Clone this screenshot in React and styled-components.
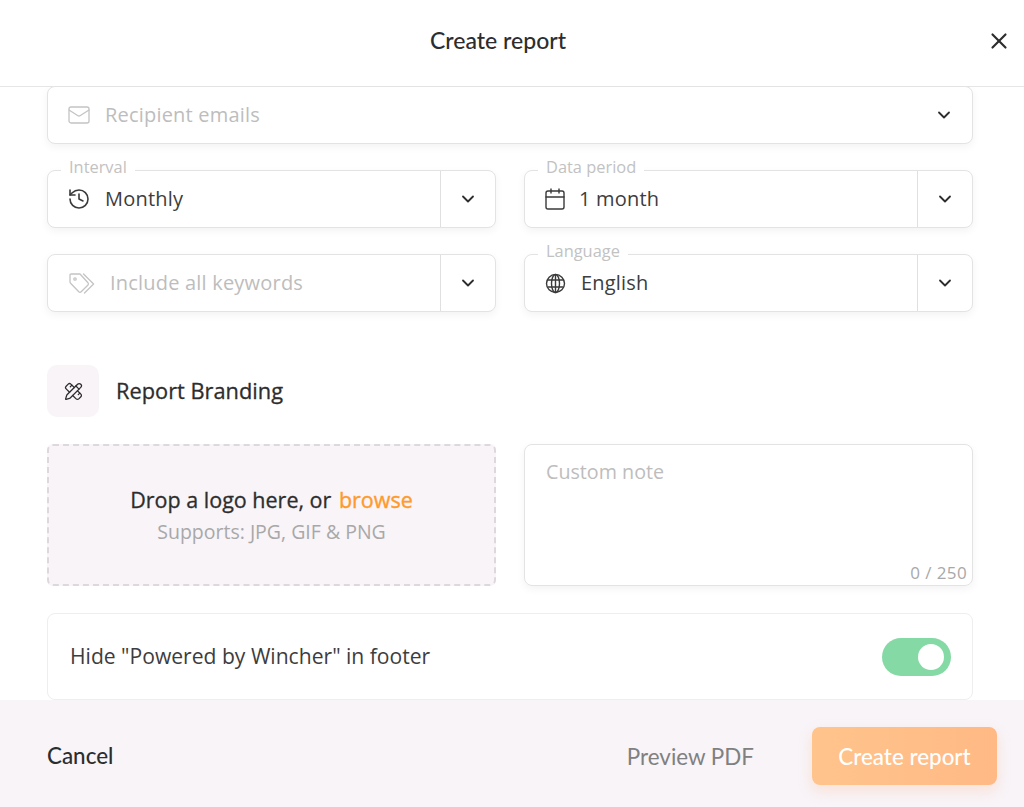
import React from "react";
import styled, { createGlobalStyle } from "styled-components";
import { Calendar, ChevronDown, History, Mail, PencilRuler, X } from "lucide-react";

const GlobalStyle = createGlobalStyle`
    html, body {
        margin: 0;
        padding: 0;
        background: #fff;
    }
    * {
        box-sizing: border-box;
    }
`;

const Page = styled.div`
    width: 1024px;
    height: 807px;
    display: flex;
    flex-direction: column;
    overflow: hidden;
    background: #fff;
    font-family: "Open Sans", sans-serif;
    color: #2d2d2d;
`;
const Header = styled.header`
    height: 87px;
    flex: none;
    display: flex;
    align-items: center;
    justify-content: center;
    position: relative;
    border-bottom: 1px solid #e6e6e6;
    padding: 0 28px 6px 0;
    font-family: Lato, sans-serif;
    font-size: 23px;
    font-weight: 500;
`;
const Close = styled.button`
    position: absolute;
    top: 28px;
    right: 12px;
    display: flex;
    padding: 0;
    border: none;
    background: none;
    color: #2d2d2d;
`;
const Body = styled.main`
    flex: 1;
    padding: 0 51px 0 47px;
    display: flex;
    flex-direction: column;
    margin-top: -1px;
    overflow: hidden;
`;
const FieldGrid = styled.div`
    display: grid;
    grid-template-columns: 449px 449px;
    gap: 26px 28px;
`;
const Field = styled.div`
    grid-column: ${({ wide }) => (wide ? "1 / -1" : "auto")};
    position: relative;
    height: 58px;
    display: flex;
    align-items: center;
    background: #fff;
    border: 1px solid #e3e3e3;
    border-radius: 8px;
    box-shadow: 0 3px 8px rgba(0, 0, 0, 0.05);
`;
const FloatLabel = styled.span`
    position: absolute;
    top: -14px;
    left: 13px;
    padding: 0 8px;
    background: #fff;
    font-size: 16.4px;
    line-height: 20px;
    color: #c2c2c2;
`;
const FieldIcon = styled.span`
    display: flex;
    margin-left: ${({ inset }) => inset}px;
    color: ${({ muted }) => (muted ? "#c4c4c4" : "#3a3a3a")};
`;
const FieldText = styled.span`
    flex: 1;
    margin-left: ${({ gap }) => gap}px;
    padding-bottom: 2px;
    font-size: 20px;
    letter-spacing: 0.2px;
    color: ${({ muted }) => (muted ? "#bdbdbd" : "#3d3d3d")};
`;
const Caret = styled.span`
    width: ${({ bare }) => (bare ? "57px" : "55px")};
    align-self: stretch;
    display: flex;
    align-items: center;
    justify-content: center;
    border-left: ${({ bare }) => (bare ? "none" : "1px solid #e0e0e0")};
    color: #2d2d2d;
`;
const SectionTitle = styled.div`
    display: flex;
    align-items: center;
    gap: 17px;
    margin-top: 53px;
    font-size: 21.8px;
    color: #2d2d2d;
    -webkit-text-stroke: 0.3px #2d2d2d;
`;
const SectionName = styled.span`
    padding-bottom: 2px;
`;
const IconTile = styled.span`
    width: 52px;
    height: 52px;
    display: flex;
    align-items: center;
    justify-content: center;
    border-radius: 10px;
    background: #f8f4f8;
    -webkit-text-stroke: 0;
`;
const BrandGrid = styled.div`
    display: grid;
    grid-template-columns: 449px 449px;
    gap: 28px;
    margin-top: 27px;
`;
const DropZone = styled.div`
    height: 142px;
    display: flex;
    flex-direction: column;
    align-items: center;
    justify-content: center;
    background: #f8f4f8;
    border: 2px dashed #dcd8dc;
    border-radius: 6px;
`;
const DropTitle = styled.div`
    font-size: 21.5px;
    line-height: 30px;
    -webkit-text-stroke: 0.3px #2d2d2d;
`;
const Browse = styled.span`
    color: #ff9a2e;
    margin-left: 2px;
    -webkit-text-stroke: 0.4px #ff9a2e;
`;
const DropHint = styled.div`
    font-size: 19.5px;
    line-height: 28px;
    margin-top: 3px;
    color: #a8a8a8;
`;
const Note = styled.div`
    position: relative;
    height: 142px;
    padding: 13px 21px;
    border: 1px solid #e3e3e3;
    border-radius: 8px;
    box-shadow: 0 3px 8px rgba(0, 0, 0, 0.05);
    font-size: 19.7px;
    color: #bdbdbd;
`;
const Counter = styled.span`
    position: absolute;
    right: 5px;
    bottom: 1px;
    font-size: 17px;
    letter-spacing: 0.4px;
    color: #a8a8a8;
`;
const ToggleRow = styled.div`
    height: 87px;
    flex: none;
    margin-top: 27px;
    padding: 0 21px 0 22px;
    display: flex;
    align-items: center;
    justify-content: space-between;
    border: 1px solid #eeeeee;
    border-radius: 8px;
    font-size: 21.1px;
    color: #3d3d3d;
`;
const ToggleText = styled.span`
    padding-bottom: 2px;
`;
const Toggle = styled.span`
    width: 69px;
    height: 38px;
    display: flex;
    align-items: center;
    justify-content: flex-end;
    padding-right: 7px;
    border-radius: 19px;
    background: #84d9a4;
`;
const Knob = styled.span`
    width: 26px;
    height: 26px;
    border-radius: 50%;
    background: #fff;
`;
const Footer = styled.footer`
    height: 107px;
    flex: none;
    display: flex;
    align-items: center;
    padding: 4px 27px 0 47px;
    background: #f8f4f8;
    font-family: Lato, sans-serif;
    font-size: 22.4px;
    font-weight: 400;
`;
const Cancel = styled.span`
    flex: 1;
    font-weight: 500;
    color: #2d2d2d;
`;
const Preview = styled.span`
    margin-right: 58px;
    padding-top: 2px;
    color: #808080;
`;
const Submit = styled.button`
    width: 185px;
    height: 58px;
    padding: 2px 0 0;
    border: none;
    border-radius: 8px;
    background: linear-gradient(90deg, #ffc48c, #ffb985);
    box-shadow: 0 6px 14px rgba(255, 170, 120, 0.25);
    color: #fff;
    font: inherit;
    font-weight: 500;
`;

const TagsIcon = () => (
    <svg width="26" height="21" viewBox="0 0 26 21" fill="none" stroke="currentColor" strokeWidth="1.3" strokeLinejoin="round" strokeLinecap="round">
        <path d="M1 2.2Q1 1 2.2 1H11L19 9.8Q20 11 19 12L12.2 18.8Q11 20 9.8 18.8L1.6 10.2Q1 9.6 1 9Z" />
        <path d="M14.5 1L24.6 11L15.5 20" />
        <circle cx="6" cy="6" r="1.2" />
    </svg>
);

const GlobeIcon = () => (
    <svg width="21" height="21" viewBox="0 0 21 21" fill="none" stroke="currentColor" strokeWidth="1.4">
        <circle cx="10.5" cy="10.5" r="9" />
        <ellipse cx="10.5" cy="10.5" rx="4" ry="9" />
        <path d="M10.5 1.5V19.5M2.6 7H18.4M2.6 14H18.4" />
    </svg>
);

const down = <ChevronDown size={20} strokeWidth={2.2} />;

const App = () => (
    <Page>
        <GlobalStyle />
        <Header>
            Create report
            <Close>
                <X size={26} strokeWidth={2} />
            </Close>
        </Header>
        <Body>
            <FieldGrid>
                <Field wide>
                    <FieldIcon muted inset={19}>
                        <Mail size={24} strokeWidth={1.3} />
                    </FieldIcon>
                    <FieldText muted gap={14}>Recipient emails</FieldText>
                    <Caret bare>{down}</Caret>
                </Field>
                <Field>
                    <FloatLabel>Interval</FloatLabel>
                    <FieldIcon inset={19}>
                        <History size={24} strokeWidth={1.6} />
                    </FieldIcon>
                    <FieldText gap={14}>Monthly</FieldText>
                    <Caret>{down}</Caret>
                </Field>
                <Field>
                    <FloatLabel>Data period</FloatLabel>
                    <FieldIcon inset={18}>
                        <Calendar size={24} strokeWidth={1.4} />
                    </FieldIcon>
                    <FieldText gap={12}>1 month</FieldText>
                    <Caret>{down}</Caret>
                </Field>
                <Field>
                    <FieldIcon muted inset={21}>
                        <TagsIcon />
                    </FieldIcon>
                    <FieldText muted gap={15}>Include all keywords</FieldText>
                    <Caret>{down}</Caret>
                </Field>
                <Field>
                    <FloatLabel>Language</FloatLabel>
                    <FieldIcon inset={20}>
                        <GlobeIcon />
                    </FieldIcon>
                    <FieldText gap={15}>English</FieldText>
                    <Caret>{down}</Caret>
                </Field>
            </FieldGrid>
            <SectionTitle>
                <IconTile>
                    <PencilRuler size={19} strokeWidth={1.6} />
                </IconTile>
                <SectionName>Report Branding</SectionName>
            </SectionTitle>
            <BrandGrid>
                <DropZone>
                    <DropTitle>
                        Drop a logo here, or <Browse>browse</Browse>
                    </DropTitle>
                    <DropHint>Supports: JPG, GIF &amp; PNG</DropHint>
                </DropZone>
                <Note>
                    Custom note
                    <Counter>0 / 250</Counter>
                </Note>
            </BrandGrid>
            <ToggleRow>
                <ToggleText>Hide "Powered by Wincher" in footer</ToggleText>
                <Toggle>
                    <Knob />
                </Toggle>
            </ToggleRow>
        </Body>
        <Footer>
            <Cancel>Cancel</Cancel>
            <Preview>Preview PDF</Preview>
            <Submit>Create report</Submit>
        </Footer>
    </Page>
);

export default App;
